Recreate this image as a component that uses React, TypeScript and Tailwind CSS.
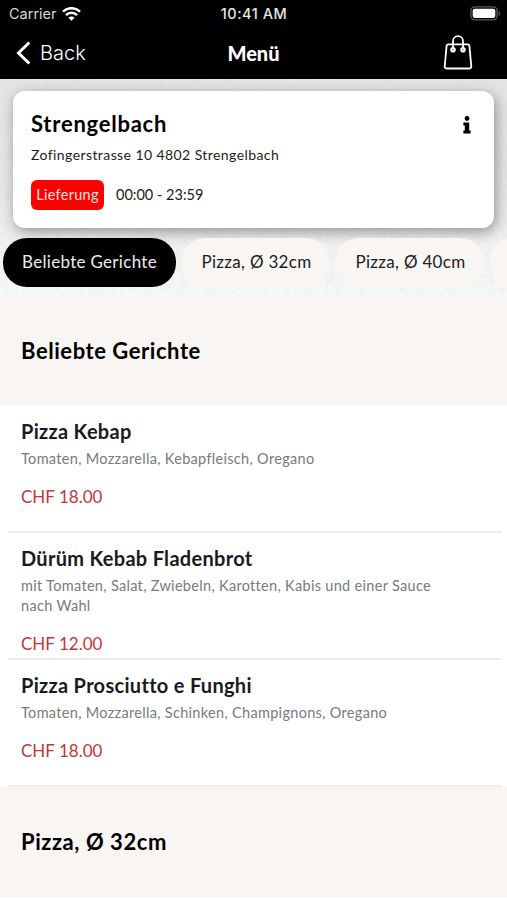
import clsx from 'clsx';

interface MenuItem {
  id: number;
  name: string;
  description: string;
  price: string;
}

const categories = ['Beliebte Gerichte', 'Pizza, Ø 32cm', 'Pizza, Ø 40cm'];

const popularItems: MenuItem[] = [
  {
    id: 1,
    name: 'Pizza Kebap',
    description: 'Tomaten, Mozzarella, Kebapfleisch, Oregano',
    price: 'CHF 18.00',
  },
  {
    id: 2,
    name: 'Dürüm Kebab Fladenbrot',
    description: 'mit Tomaten, Salat, Zwiebeln, Karotten, Kabis und einer Sauce nach Wahl',
    price: 'CHF 12.00',
  },
  {
    id: 3,
    name: 'Pizza Prosciutto e Funghi',
    description: 'Tomaten, Mozzarella, Schinken, Champignons, Oregano',
    price: 'CHF 18.00',
  },
];

function WifiIcon() {
  return (
    <svg width="19" height="14" viewBox="0 0 19 14" fill="none" stroke="white" strokeWidth="2.5">
      <path d="M1 4.7a12 12 0 0 1 17 0" />
      <path d="M4 8.1a7.8 7.8 0 0 1 11 0" />
      <path d="M9.5 13.8 6.400 10.700a4.400 4.400 0 0 1 6.200 0z" fill="white" stroke="none" />
    </svg>
  );
}

function BatteryIcon() {
  return (
    <svg width="31" height="15" viewBox="0 0 31 15" fill="none">
      <rect x="0.9" y="0.9" width="26.2" height="13" rx="3.8" stroke="#5c5c5c" strokeWidth="1.3" />
      <rect x="2.7" y="2.7" width="22.6" height="9.4" rx="2" fill="white" />
      <path d="M28.6 5v4.8c1.9-.8 1.9-4 0-4.8z" fill="#5c5c5c" />
    </svg>
  );
}

function BagIcon() {
  return (
    <svg width="30" height="36" viewBox="0 0 30 36" fill="none" stroke="white" strokeWidth="1.8">
      <path d="M5.2 9.4h19.6c.9 0 1.500.6 1.600 1.500l1.900 20.600c.1 1.200-.8 2-1.900 2H3.600c-1.100 0-2-.8-1.900-2l1.900-20.600c.1-.9.7-1.500 1.600-1.500z" />
      <path d="M10 14V6.200a5 5 0 0 1 10 0V14" />
      <circle cx="10" cy="14.800" r="1.900" fill="#aaa" />
      <circle cx="20" cy="14.800" r="1.900" fill="#aaa" />
    </svg>
  );
}

function InfoIcon() {
  return (
    <svg width="8" height="18" viewBox="0 0 8 18" fill="black">
      <circle cx="4" cy="2.5" r="2.4" />
      <path d="M.4 6.6h5.800v7.900h1.400v2.900H.4v-2.900h1.400V9.500H.4z" />
    </svg>
  );
}

// concrete wall behind the restaurant card
function StoneTexture() {
  return (
    <svg className="absolute inset-0 h-full w-full">
      <filter id="stone">
        <feTurbulence type="fractalNoise" baseFrequency="0.2" numOctaves="3" seed="4" />
        <feColorMatrix values="0 0 0 0 0.5  0 0 0 0 0.5  0 0 0 0 0.5  0.25 0 0 0 -0.1" />
      </filter>
      <rect width="100%" height="100%" filter="url(#stone)" />
    </svg>
  );
}

function Header() {
  return (
    <header className="h-[79px] bg-black font-['Inter',sans-serif] text-white">
      <div className="grid h-[27px] grid-cols-3 items-center pr-[6px] pl-[9px]">
        <div className="flex items-center gap-[5px] text-[14.5px] text-[#d6d6d6]">
          <span>Carrier</span>
          <WifiIcon />
        </div>
        <span className="pr-[2px] text-center text-[14.5px] font-medium tracking-[0.5px] text-[#e6e6e6]">
          10:41 AM
        </span>
        <div className="flex justify-end">
          <BatteryIcon />
        </div>
      </div>
      <div className="grid h-[52px] grid-cols-3 items-center pr-[34px] pl-[16px]">
        <button type="button" className="flex items-center gap-[9px]">
          <svg width="15" height="24" viewBox="0 0 15 24" fill="none" stroke="white" strokeWidth="3">
            <path d="M13.3 1.5 2.5 12l10.800 10.500" />
          </svg>
          <span className="text-[20px] font-light">Back</span>
        </button>
        <h1 className="pl-[18px] text-center font-['Lato',sans-serif] text-[20px] font-black">Menü</h1>
        <button type="button" className="flex justify-end">
          <BagIcon />
        </button>
      </div>
    </header>
  );
}

function RestaurantCard() {
  return (
    <div className="relative mx-[13px] flex h-[137px] justify-between rounded-[12px] bg-white pt-[19px] pr-[23px] pl-[18px] shadow-[2px_4px_14px_rgba(0,0,0,0.38)]">
      <div>
        <h2 className="text-[22px] leading-[28px] font-bold tracking-[0.75px] text-black">Strengelbach</h2>
        <p className="mt-[7px] text-[14px] leading-[20px] tracking-[0.42px] text-[#1c1c1c]">
          Zofingerstrasse 10 4802 Strengelbach
        </p>
        <div className="mt-[15px] flex items-center gap-[12px]">
          <span className="flex h-[30px] w-[73px] items-center justify-center rounded-[6px] bg-[#ff0000] text-[14.5px] tracking-[0.3px] text-[#ffe4e0]">
            Lieferung
          </span>
          <span className="text-[14.5px] text-[#1c1c1c]">00:00 - 23:59</span>
        </div>
      </div>
      <div className="pt-[6px]">
        <InfoIcon />
      </div>
    </div>
  );
}

function CategoryTabs() {
  return (
    <nav className="relative mt-[10px] flex gap-[5px] pl-[3px]">
      {categories.map((category, index) => (
        <button
          key={category}
          type="button"
          className={clsx(
            'h-[49px] shrink-0 rounded-[24px] pb-[2px] text-[17px] tracking-[0.3px]',
            index === 0 ? 'w-[173px] bg-black text-[#ececec]' : 'w-[149px] bg-[#f8f5f2] pl-[2px] text-[#1c1c1c]',
          )}
        >
          {category}
        </button>
      ))}
      <div className="h-[49px] w-[149px] shrink-0 rounded-[24px] bg-[#f8f5f2]" />
    </nav>
  );
}

function SectionTitle({ title }: { title: string }) {
  return (
    <div className="flex h-[110px] items-center bg-[#f8f5f2] pb-[1px] pl-[21px]">
      <h2 className="text-[22px] leading-[28px] font-bold tracking-[0.55px] text-black">{title}</h2>
    </div>
  );
}

function MenuRow({ item }: { item: MenuItem }) {
  return (
    <li className="mr-[5px] ml-[8px] h-[127px] border-b-2 border-[#ededee] pt-[12px] pl-[13px]">
      <h3 className="text-[20px] leading-[26px] font-bold tracking-[0.3px] text-[#1a1a1e]">{item.name}</h3>
      <p className="mt-[5px] w-[430px] text-[14.5px] leading-[20px] tracking-[0.31px] text-[#7a7a7a]">
        {item.description}
      </p>
      <p className="mt-[16px] text-[17px] leading-[24px] text-[#c43638]">{item.price}</p>
    </li>
  );
}

export default function App() {
  return (
    <main className="h-[900px] w-[507px] overflow-hidden bg-white font-['Lato',sans-serif]">
      <Header />
      <section className="relative h-[217px] overflow-hidden bg-linear-to-b from-[#e4e4e4] via-[#e8e8e8] to-[#f7f8f8] pt-[12px]">
        <StoneTexture />
        <RestaurantCard />
        <CategoryTabs />
      </section>
      <SectionTitle title="Beliebte Gerichte" />
      <ul>
        {popularItems.map((item) => (
          <MenuRow key={item.id} item={item} />
        ))}
      </ul>
      <SectionTitle title="Pizza, Ø 32cm" />
    </main>
  );
}
